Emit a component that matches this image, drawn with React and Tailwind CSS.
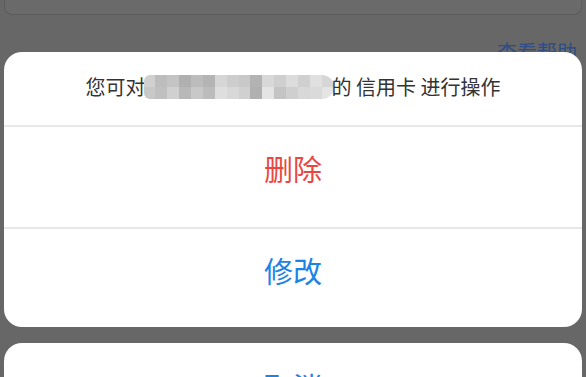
const blobTop = [
    "bg-[#d0d0d0]", "bg-[#bdbdbd]", "bg-[#c4c4c4]", "bg-[#b0b0b0]",
    "bg-[#bcbcbc]", "bg-[#b4b4b4]", "bg-[#d6d6d6]", "bg-[#cdcdcd]",
    "bg-[#c8c8c8]", "bg-[#b3b3b3]", "bg-[#d8d8d8]", "bg-[#cfcfcf]",
    "bg-[#dcdcdc]", "bg-[#d0d0d0]", "bg-[#e0e0e0]", "bg-[#d6d6d6]",
];
const blobBottom = [
    "bg-[#c8c8c8]", "bg-[#c0c0c0]", "bg-[#d0d0d0]", "bg-[#b8b8b8]",
    "bg-[#c8c8c8]", "bg-[#bcbcbc]", "bg-[#dedede]", "bg-[#d8d8d8]",
    "bg-[#d0d0d0]", "bg-[#b0b0b0]", "bg-[#e4e4e4]", "bg-[#c4c4c4]",
    "bg-[#cfcfcf]", "bg-[#d8d8d8]", "bg-[#dadada]", "bg-[#e4e4e4]",
];

// pixelated block that hides the card name
function MaskedName() {
    return (
        <span className="mx-[-2px] inline-flex h-[24px] w-[190px] flex-col overflow-hidden rounded-l-[6px] rounded-r-[12px] align-middle">
            <span className="flex h-[12px]">
                {blobTop.map((c, i) => (
                    <span key={i} className={`h-full flex-1 ${c}`} />
                ))}
            </span>
            <span className="flex h-[12px]">
                {blobBottom.map((c, i) => (
                    <span key={i} className={`h-full flex-1 ${c}`} />
                ))}
            </span>
        </span>
    );
}

export default function App() {
    return (
        <div className="relative h-[377px] w-[586px] overflow-hidden bg-[#676767] font-['Noto_Sans_CJK_SC',sans-serif]">
            {/* dimmed page behind the sheet */}
            <div className="mx-[4px] h-[15px] rounded-b-[8px] border border-t-0 border-[#5c5c5c] bg-[#6a6a6a]" />
            <div className="mt-[25px] whitespace-nowrap pl-[497px] text-[20px] leading-[24px] text-[#2d4d84]">
                查看帮助
            </div>

            {/* action sheet */}
            <div className="absolute left-[4px] right-[4px] top-[52px] flex flex-col gap-[16px]">
                <div className="overflow-hidden rounded-[18px] bg-white">
                    <div className="flex h-[73px] items-center justify-center whitespace-nowrap pb-[4px] text-[20px] text-[#333333]">
                        <span>您可对</span>
                        <MaskedName />
                        <span>的 信用卡 进行操作</span>
                    </div>
                    <div className="h-[2px] bg-[#e8e8e8]" />
                    <button className="flex h-[100px] w-full items-center justify-center pb-[16px] text-[29px] text-[#e9473f]">
                        删除
                    </button>
                    <div className="h-[2px] bg-[#e8e8e8]" />
                    <button className="flex h-[98px] w-full items-center justify-center pb-[14px] text-[29px] text-[#1a84e6]">
                        修改
                    </button>
                </div>
                <button className="flex h-[100px] w-full items-center justify-center rounded-[18px] bg-white pb-[12px] text-[29px] text-[#1a84e6]">
                    取消
                </button>
            </div>
        </div>
    );
}
